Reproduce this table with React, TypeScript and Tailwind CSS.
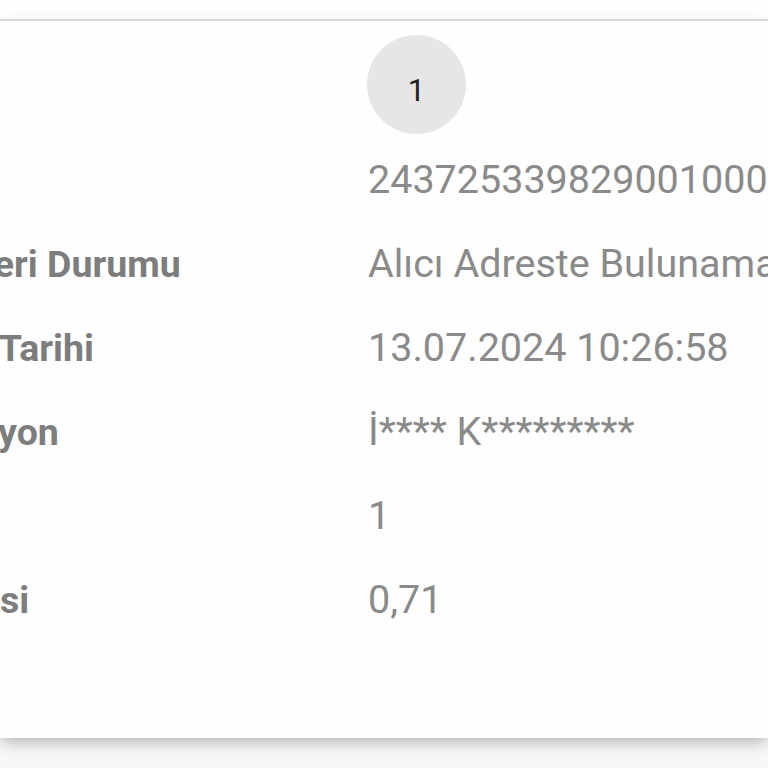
const rows = [
  { label: 'Gönderi No', value: '243725339829001000012' },
  { label: 'Gönderi Durumu', value: 'Alıcı Adreste Bulunamadı' },
  { label: 'Kayıt Tarihi', value: '13.07.2024 10:26:58' },
  { label: 'Pozisyon', value: 'İ**** K*********' },
  { label: 'Adet', value: '1' },
  { label: 'Ek Desi', value: '0,71' },
];

export default function App() {
  return (
    <div className="w-[768px] h-[768px] overflow-hidden bg-[#f7f7f7] font-['Roboto',sans-serif]">
      <div className="h-[19px] bg-[#fefefe]" />

      {/* Shipment card */}
      <div className="h-[719px] border-t-2 border-[#d9d9d9] bg-[#fefefe] shadow-[0_6px_14px_-2px_rgba(0,0,0,0.28)]">
        <div className="ml-[-95px] grid grid-cols-[463px_1fr]">
          {/* Piece badge */}
          <div className="h-[117px]" />
          <div className="h-[117px] pt-[14px]">
            <div className="w-[99px] h-[99px] rounded-full bg-[#e6e6e6] flex items-center justify-center ml-[-1px] pt-[14px]">
              <span className="text-[31px] text-[#222]">1</span>
            </div>
          </div>

          {rows.map((row) => (
            <div key={row.label} className="contents">
              <div className="h-[84px] flex items-center whitespace-nowrap text-[37.5px] font-bold text-[#7d7d7d]">
                {row.label === 'Gönderi No' ? '' : row.label}
              </div>
              <div className="h-[84px] flex items-center whitespace-nowrap text-[39.5px] text-[#8a8a8a]">
                {row.value}
              </div>
            </div>
          ))}
        </div>
      </div>
    </div>
  );
}
